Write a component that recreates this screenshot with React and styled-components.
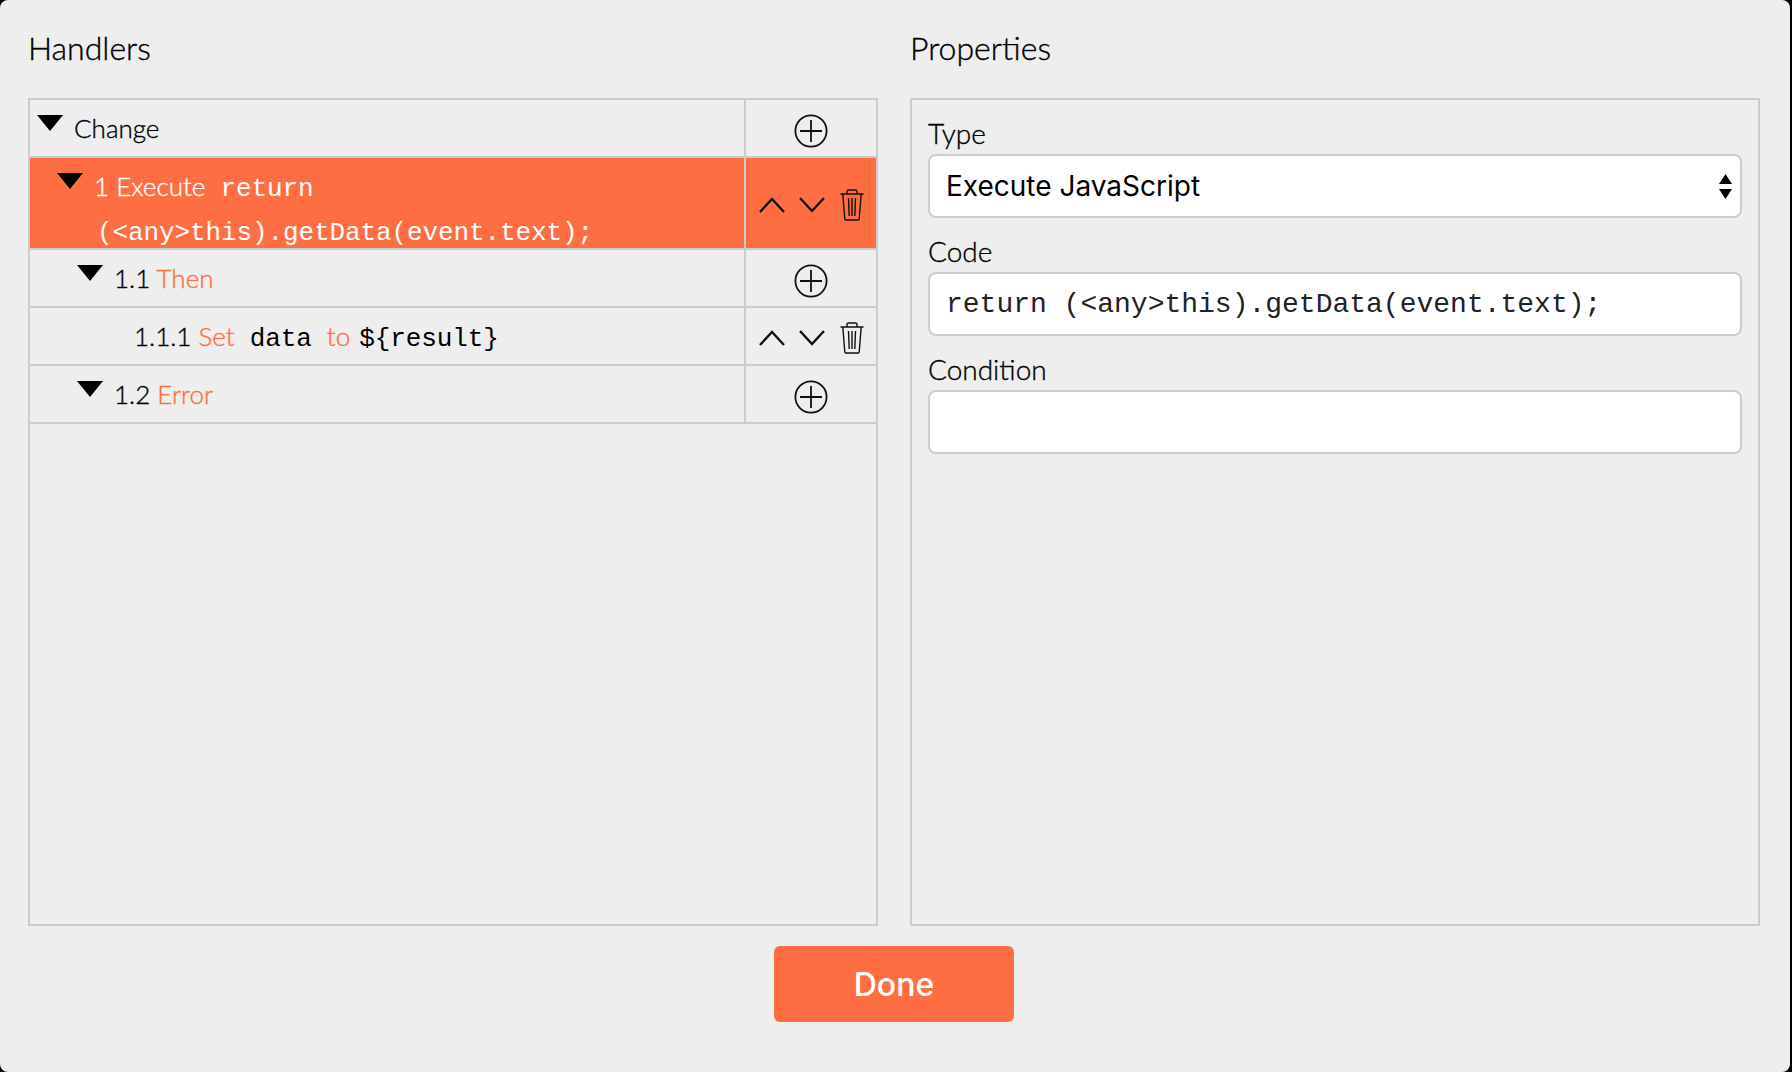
import React from "react";
import styled, { createGlobalStyle } from "styled-components";

const ORANGE = "#ff6e42";
const LINE = "#cccccc";

const GlobalStyle = createGlobalStyle`
  html, body {
    margin: 0;
    padding: 0;
    background: #000;
  }
  * {
    box-sizing: border-box;
  }
`;

const Dialog = styled.div`
  width: 1790px;
  height: 1072px;
  padding: 28px 30px 50px 28px;
  background: #eeeeee;
  border-radius: 8px;
  font-family: Lato, "Open Sans", sans-serif;
  font-weight: 300;
  color: #000;
  -webkit-text-stroke: 0.35px;
  display: flex;
  flex-direction: column;
`;

const Columns = styled.div`
  flex: 1;
  min-height: 0;
  display: grid;
  grid-template-columns: 850px 850px;
  column-gap: 32px;
`;

const Column = styled.section`
  display: flex;
  flex-direction: column;
  min-height: 0;
`;

const Title = styled.h2`
  margin: 0 0 32px;
  height: 38px;
  font-size: 32px;
  line-height: 40px;
  font-weight: 300;
`;

const Panel = styled.div`
  flex: 1;
  border: 2px solid ${LINE};
`;

const Row = styled.div`
  display: flex;
  height: ${(p) => (p.$selected ? "92px" : "58px")};
  border-bottom: 2px solid ${LINE};
  background: ${(p) => (p.$selected ? ORANGE : "transparent")};
  color: ${(p) => (p.$selected ? "#fff" : "#000")};
`;

const RowMain = styled.div`
  flex: 1;
  min-width: 0;
  border-right: 2px solid ${LINE};
  padding-left: ${(p) => p.$indent}px;
  display: flex;
  align-items: flex-start;
`;

const RowText = styled.div`
  font-size: 26px;
  line-height: 44px;
  padding-top: 6px;
  white-space: nowrap;
`;

const Triangle = styled.svg`
  flex: none;
  width: 26px;
  height: 16px;
  margin: 15px 11px 0 0;
`;

const Keyword = styled.span`
  color: ${ORANGE};
`;

const Code = styled.code`
  font-family: "Liberation Mono", monospace;
  font-weight: 400;
  font-size: 26px;
  line-height: 1;
  letter-spacing: -0.1px;
  -webkit-text-stroke: 0;
  margin: 0 ${(p) => p.$gap || 0}px;
`;

const Hanging = styled.span`
  display: block;
  padding-left: 3px;
`;

const Actions = styled.div`
  flex: none;
  width: 130px;
  padding-top: ${(p) => (p.$add ? "5px" : "3px")};
  display: flex;
  align-items: center;
  justify-content: center;
  gap: 14px;
`;

const IconButton = styled.svg`
  display: block;
  flex: none;
  fill: none;
  stroke: #111;
  margin-left: ${(p) => p.$nudge || 0}px;
`;

const Properties = styled.div`
  flex: 1;
  border: 2px solid ${LINE};
  padding: 16px 16px 0;
`;

const FieldLabel = styled.label`
  display: block;
  font-size: 28px;
  line-height: 34px;
  height: 38px;
`;

const Field = styled.div`
  height: 64px;
  margin: 0 0 16px;
  padding: 0 8px 0 16px;
  display: flex;
  align-items: center;
  justify-content: space-between;
  background: #fff;
  border: 2px solid ${LINE};
  border-radius: 8px;
  color: ${(p) => (p.$select ? "#000" : "#222")};
  font-family: ${(p) => (p.$mono ? '"Liberation Mono", monospace' : 'Inter, sans-serif')};
  font-weight: 400;
  font-size: 28px;
  -webkit-text-stroke: 0;
`;

const Footer = styled.div`
  display: flex;
  justify-content: center;
  padding: 20px 0 0;
`;

const DoneButton = styled.button`
  width: 240px;
  height: 76px;
  border: 0;
  border-radius: 6px;
  background: ${ORANGE};
  color: #fff;
  font-family: Inter, sans-serif;
  font-weight: 500;
  font-size: 32px;
  -webkit-text-stroke: 0;
`;

const Caret = () => (
  <Triangle viewBox="0 0 26 16">
    <path d="M0 0h26L13 16z" fill="#000" />
  </Triangle>
);

const Plus = () => (
  <IconButton width="34" height="34" viewBox="0 0 34 34" strokeWidth="1.8">
    <circle cx="17" cy="17" r="15.6" />
    <path d="M17 6v22M6 17h22" />
  </IconButton>
);

const Chevron = ({ up }) => (
  <IconButton width="26" height="16" viewBox="0 0 26 16" strokeWidth="2.4">
    <path d={up ? "M1 15L13 2l12 13" : "M1 1l12 13L25 1"} />
  </IconButton>
);

const Trash = () => (
  <IconButton $nudge={1} width="24" height="32" viewBox="0 0 24 32" strokeWidth="1.4">
    <path d="M.500 5h23M7 5V2.500Q7 1 8.500 1h7Q17 1 17 2.500V5M2.800 5l2 25q0 1 1 1h12.400q1 0 1-1l2-25M8.500 9l.7 18M12 9v18M15.500 9l-.7 18" />
  </IconButton>
);

const MoveActions = () => (
  <Actions>
    <Chevron up />
    <Chevron />
    <Trash />
  </Actions>
);

const AddAction = () => (
  <Actions $add>
    <Plus />
  </Actions>
);

export default function App() {
  return (
    <>
      <GlobalStyle />
      <Dialog>
        <Columns>
          <Column>
            <Title>Handlers</Title>
            <Panel>
              <Row>
                <RowMain $indent={7}>
                  <Caret />
                  <RowText>Change</RowText>
                </RowMain>
                <AddAction />
              </Row>
              <Row $selected>
                <RowMain $indent={27}>
                  <Caret />
                  <RowText>
                    1 Execute <Code $gap={8}>return</Code>
                    <Hanging>
                      <Code>(&lt;any&gt;this).getData(event.text);</Code>
                    </Hanging>
                  </RowText>
                </RowMain>
                <MoveActions />
              </Row>
              <Row>
                <RowMain $indent={47}>
                  <Caret />
                  <RowText>
                    1.1 <Keyword>Then</Keyword>
                  </RowText>
                </RowMain>
                <AddAction />
              </Row>
              <Row>
                <RowMain $indent={104}>
                  <RowText>
                    1.1.1 <Keyword>Set</Keyword> <Code $gap={8}>data</Code> <Keyword>to</Keyword>{" "}
                    <Code $gap={2}>{"${result}"}</Code>
                  </RowText>
                </RowMain>
                <MoveActions />
              </Row>
              <Row>
                <RowMain $indent={47}>
                  <Caret />
                  <RowText>
                    1.2 <Keyword>Error</Keyword>
                  </RowText>
                </RowMain>
                <AddAction />
              </Row>
            </Panel>
          </Column>
          <Column>
            <Title>Properties</Title>
            <Properties>
              <FieldLabel>Type</FieldLabel>
              <Field $select>
                Execute JavaScript
                <svg width="13" height="25" viewBox="0 0 13 25">
                  <path d="M6.500 0L13 10H0zM0 15h13L6.500 25z" fill="#000" />
                </svg>
              </Field>
              <FieldLabel>Code</FieldLabel>
              <Field $mono>return (&lt;any&gt;this).getData(event.text);</Field>
              <FieldLabel>Condition</FieldLabel>
              <Field />
            </Properties>
          </Column>
        </Columns>
        <Footer>
          <DoneButton>Done</DoneButton>
        </Footer>
      </Dialog>
    </>
  );
}
